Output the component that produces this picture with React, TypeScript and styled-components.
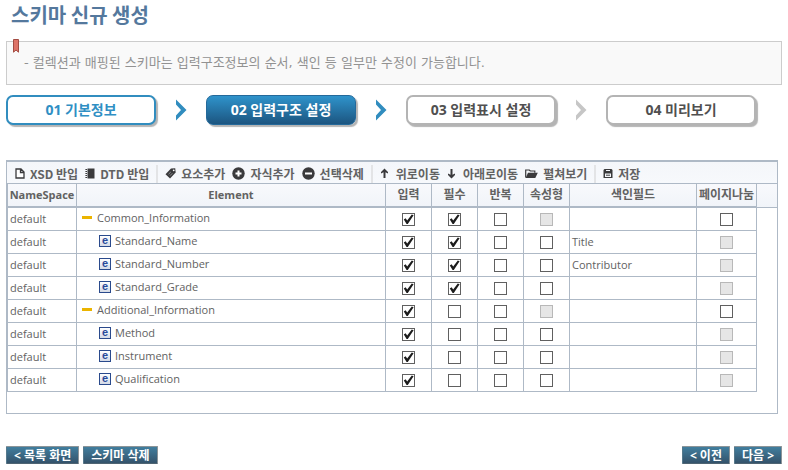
import React, { useState } from "react";
import styled, { createGlobalStyle, css } from "styled-components";

const line = "#aeb9c6";
const ink = "#3a3a3c";

const GlobalStyle = createGlobalStyle`
  * { box-sizing: border-box; }
  body {
    margin: 0;
    background: #fff;
    color: #626262;
    font-family: "Open Sans", "Noto Sans CJK KR", sans-serif;
    font-size: 12px;
  }
  button, input { font: inherit; color: inherit; margin: 0; }
  button { cursor: pointer; }
`;

const Page = styled.main`
  padding: 0 6px 6px;
`;

const Title = styled.h1`
  margin: 0;
  padding-left: 5px;
  font-family: "Noto Sans CJK KR", sans-serif;
  font-size: 20px;
  font-weight: 700;
  line-height: 29px;
  color: #54789d;
`;

const Notice = styled.p`
  position: relative;
  margin: 12px 0 10px;
  padding: 9px 17px 10px;
  border: 1px solid #ccc;
  background: #f9f9f9;
  font-family: "DejaVu Sans", "Noto Sans CJK KR", sans-serif;
  font-size: 13px;
  line-height: 23px;
  color: #929292;
`;

const Ribbon = styled.svg`
  position: absolute;
  left: 6px;
  top: -3px;
`;

const Steps = styled.nav`
  display: flex;
  align-items: center;
  margin-right: 26px;
`;

type StepKind = "done" | "current" | "next";

const Step = styled.button<{ $kind: StepKind }>`
  flex: 1 1 150px;
  height: 30px;
  padding: 0;
  border-radius: 7px;
  font-size: 14px;
  font-weight: 700;
  line-height: 24px;
  ${(p) =>
    p.$kind === "done" &&
    css`
      color: #2f8fc4;
      background: #fff;
      border: 2px solid #318dbf;
      box-shadow: 2px 2px 1px #b4b4b4;
    `}
  ${(p) =>
    p.$kind === "current" &&
    css`
      color: #fff;
      background: linear-gradient(#2f93cb, #1c5580);
      border: 1px solid #24699a;
      box-shadow: 2px 2px 1px #b4b4b4;
    `}
  ${(p) =>
    p.$kind === "next" &&
    css`
      color: #505050;
      background: #fff;
      border: 2px solid #b4b4b4;
      box-shadow: 2px 2px 1px #b4b4b4;
    `}
`;

const StepGap = styled.span`
  display: flex;
  justify-content: center;
  width: 50px;
`;

const Panel = styled.section`
  margin: 35px 4px 32px 0;
  min-height: 254px;
  border: 1px solid ${line};
  border-top-width: 2px;
`;

const Toolbar = styled.div`
  display: flex;
  align-items: center;
  gap: 7px;
  height: 22px;
  padding: 2px 8px 0;
  border-bottom: 1px solid ${line};
  background: linear-gradient(#f4f6fa, #f7f9fc);
`;

const ToolButton = styled.button`
  display: flex;
  align-items: center;
  gap: 5px;
  padding: 0;
  border: 0;
  background: none;
  font-family: "Noto Sans CJK KR", sans-serif;
  font-weight: 700;
  line-height: 18px;
  white-space: nowrap;
`;

const Separator = styled.span`
  width: 2px;
  height: 18px;
  background: #e3e4e6;
`;

const Grid = styled.table`
  width: 100%;
  table-layout: fixed;
  border-collapse: separate;
  border-spacing: 0;
  border-left: 1px solid ${line};
`;

const Head = styled.th<{ $latin: boolean }>`
  height: 24px;
  padding: 0;
  border-right: 1px solid ${line};
  border-bottom: 2px solid ${line};
  background: linear-gradient(#f8f9fc, #f1f4f9);
  font-size: ${(p) => (p.$latin ? 11 : 12)}px;
  font-weight: 700;
  line-height: 18px;
  white-space: nowrap;
  &:last-child { border-right: 0; border-bottom-width: 1px; }
`;

const Cell = styled.td<{ $center?: boolean }>`
  height: 23px;
  padding: 0 2px;
  border-right: 1px solid ${line};
  border-bottom: 1px solid ${line};
  font-size: 11px;
  line-height: 18px;
  text-align: ${(p) => (p.$center ? "center" : "left")};
  white-space: nowrap;
`;

const Filler = styled.td`
  padding: 0;
`;

const Node = styled.div<{ $child: boolean }>`
  display: flex;
  align-items: center;
  gap: 4px;
  padding-left: ${(p) => (p.$child ? 20 : 3)}px;
  padding-bottom: 3px;
`;

const Toggle = styled.button`
  display: flex;
  align-items: center;
  width: 11px;
  height: 12px;
  padding: 0;
  border: 0;
  background: none;
  &::before {
    content: "";
    width: 10px;
    height: 3px;
    background: #ebb400;
  }
`;

const ElementIcon = styled.span`
  width: 12px;
  height: 12px;
  border: 1px solid #2a4a8c;
  background: linear-gradient(#fff, #d4dae6);
  color: #2a4a9a;
  font-family: "Liberation Sans", sans-serif;
  font-size: 11px;
  font-weight: 700;
  line-height: 9px;
  text-align: center;
`;

const CheckWrap = styled.span`
  position: relative;
  display: block;
  width: 13px;
  height: 13px;
  margin: 0 auto;
  svg { position: absolute; left: 0; top: 0; pointer-events: none; }
`;

const CheckInput = styled.input`
  display: block;
  appearance: none;
  width: 13px;
  height: 13px;
  border: 1px solid #606060;
  background: #fff;
  &:disabled { border-color: #b8b8b8; background: #e6e6e6; }
`;

const Footer = styled.footer`
  display: flex;
  justify-content: space-between;
`;

const Group = styled.div`
  display: flex;
  gap: 4px;
`;

const Action = styled.button`
  height: 18px;
  padding: 0 7px;
  border: 1px solid #8c9498;
  border-left-color: #55798c;
  border-bottom-color: #4e6472;
  border-radius: 1px;
  background: linear-gradient(#417e9e, #34536b);
  color: #fff;
  font-weight: 700;
  line-height: 15px;
  white-space: nowrap;
`;

const Arrow = ({ color }: { color: string }) => (
  <svg width="12" height="22" viewBox="0 0 12 22" aria-hidden="true">
    <path d="M1 0.5 11.5 11 1 21.5V16.5L6 11 1 5.5Z" fill={color} />
  </svg>
);

const icons: Record<string, React.ReactElement> = {
  file: (
    <svg width="10" height="11" viewBox="0 0 10 11">
      <path d="M1 1h5l3 3v6H1ZM5.5 1v3.5H9" fill="#fff" stroke={ink} strokeWidth="1.3" />
    </svg>
  ),
  book: (
    <svg width="10" height="11" viewBox="0 0 10 11">
      <path d="M2.5 .5H9.5v10H2.5Z" fill={ink} />
      <path d="M1.2 1v9.5" stroke={ink} strokeWidth="1.6" strokeDasharray="1 1" />
    </svg>
  ),
  tag: (
    <svg width="11" height="11" viewBox="0 0 11 11">
      <path d="M6 .5 10.2 .3 10.7 4.5 5 10.5 .5 6.2Z" fill={ink} />
      <circle cx="8.7" cy="2.3" r=".9" fill="#fff" />
      <path d="M3.5 6.2 5.8 4M5 7.7 7.3 5.3" stroke="#b4b6ba" strokeWidth=".7" />
    </svg>
  ),
  plus: (
    <svg width="13" height="13" viewBox="0 0 13 13">
      <circle cx="6.5" cy="6.5" r="6.2" fill={ink} />
      <path d="M6.5 3.5v6M3.5 6.5h6" stroke="#fff" strokeWidth="2" />
    </svg>
  ),
  minus: (
    <svg width="13" height="13" viewBox="0 0 13 13">
      <circle cx="6.5" cy="6.5" r="6.2" fill={ink} />
      <path d="M3 6.5h7" stroke="#fff" strokeWidth="2" />
    </svg>
  ),
  up: (
    <svg width="11" height="11" viewBox="0 0 11 11">
      <path d="M4.5 .5 8 4v1.5L5.5 4.2V10h-2V4.2L1 5.5V4Z" fill={ink} />
    </svg>
  ),
  down: (
    <svg width="11" height="11" viewBox="0 0 11 11">
      <path d="M4.5 10.5 8 7V5.5L5.5 6.8V1h-2v5.8L1 5.5V7Z" fill={ink} />
    </svg>
  ),
  folder: (
    <svg width="13" height="11" viewBox="0 0 13 11">
      <path d="M.7 9.5V2h3.6l1 1h4.5v1.8" fill="none" stroke={ink} strokeWidth="1.2" />
      <path d="M3 4.7h9.8L10.3 10H.6Z" fill={ink} />
    </svg>
  ),
  save: (
    <svg width="10" height="11" viewBox="0 0 10 11">
      <path d="M1.5 1h7l1 1v8h-9V2Z" fill={ink} />
      <path d="M3 2h4v1H3ZM2 5.5h6V9H2Z" fill="#f4f6fa" />
      <path d="M3 7.2h4" stroke={ink} />
    </svg>
  ),
};

const tools = [
  ["file", "XSD 반입"],
  ["book", "DTD 반입"],
  null,
  ["tag", "요소추가"],
  ["plus", "자식추가"],
  ["minus", "선택삭제"],
  null,
  ["up", "위로이동"],
  ["down", "아래로이동"],
  ["folder", "펼쳐보기"],
  null,
  ["save", "저장"],
];

const steps: [string, StepKind][] = [
  ["01 기본정보", "done"],
  ["02 입력구조 설정", "current"],
  ["03 입력표시 설정", "next"],
  ["04 미리보기", "next"],
];

// Flags per column: "x" ticked, "o" empty, "-" disabled.
const rows: { name: string; child: boolean; flags: string; field: string; page: string }[] = [
  { name: "Common_Information", child: false, flags: "xxo-", field: "", page: "o" },
  { name: "Standard_Name", child: true, flags: "xxoo", field: "Title", page: "-" },
  { name: "Standard_Number", child: true, flags: "xxoo", field: "Contributor", page: "-" },
  { name: "Standard_Grade", child: true, flags: "xxoo", field: "", page: "-" },
  { name: "Additional_Information", child: false, flags: "xoo-", field: "", page: "o" },
  { name: "Method", child: true, flags: "xooo", field: "", page: "-" },
  { name: "Instrument", child: true, flags: "xooo", field: "", page: "-" },
  { name: "Qualification", child: true, flags: "xooo", field: "", page: "-" },
];

const flagNames = ["입력", "필수", "반복", "속성형"];

function Check({ state, label }: { state: string; label: string }) {
  const [on, setOn] = useState(state === "x");
  return (
    <CheckWrap>
      <CheckInput
        type="checkbox"
        aria-label={label}
        checked={on}
        disabled={state === "-"}
        onChange={(e) => setOn(e.target.checked)}
      />
      {on && (
        <svg width="13" height="13" viewBox="0 0 13 13" aria-hidden="true">
          <path d="M1.8 6.4 3.6 5.2 5.2 7.5 9.8 1.6 11.6 2.2 5.8 10.9H4.6Z" fill="#1c1c1c" />
        </svg>
      )}
    </CheckWrap>
  );
}

export default function App() {
  return (
    <Page>
      <GlobalStyle />
      <Title>스키마 신규 생성</Title>
      <Notice>
        <Ribbon width="6" height="14" viewBox="0 0 6 14" aria-hidden="true">
          <path d="M.5 .5h5v12.7L3 11 .5 13.2Z" fill="#de7468" stroke="#a34c43" />
        </Ribbon>
        - 컬렉션과 매핑된 스키마는 입력구조정보의 순서, 색인 등 일부만 수정이 가능합니다.
      </Notice>
      <Steps>
        {steps.map(([label, kind], i) => (
          <React.Fragment key={label}>
            {i > 0 && (
              <StepGap>
                <Arrow color={i < 3 ? "#318dbf" : "#c6c6c6"} />
              </StepGap>
            )}
            <Step type="button" $kind={kind}>
              {label}
            </Step>
          </React.Fragment>
        ))}
      </Steps>
      <Panel>
        <Toolbar>
          {tools.map((tool, i) =>
            tool ? (
              <ToolButton key={i} type="button">
                {icons[tool[0]]}
                {tool[1]}
              </ToolButton>
            ) : (
              <Separator key={i} />
            )
          )}
        </Toolbar>
        <Grid>
          <colgroup>
            <col style={{ width: 69 }} />
            <col style={{ width: 309 }} />
            <col style={{ width: 46 }} />
            <col style={{ width: 46 }} />
            <col style={{ width: 46 }} />
            <col style={{ width: 46 }} />
            <col />
            <col style={{ width: 60 }} />
            <col style={{ width: 20 }} />
          </colgroup>
          <thead>
            <tr>
              {["NameSpace", "Element", ...flagNames, "색인필드", "페이지나눔", ""].map((h, i) => (
                <Head key={i} $latin={i < 2}>
                  {h}
                </Head>
              ))}
            </tr>
          </thead>
          <tbody>
            {rows.map((row) => (
              <tr key={row.name}>
                <Cell>default</Cell>
                <Cell>
                  <Node $child={row.child}>
                    {row.child ? (
                      <ElementIcon aria-hidden="true">e</ElementIcon>
                    ) : (
                      <Toggle type="button" aria-label={`${row.name} 접기`} />
                    )}
                    {row.name}
                  </Node>
                </Cell>
                {flagNames.map((name, i) => (
                  <Cell key={name} $center>
                    <Check state={row.flags[i]} label={`${row.name} ${name}`} />
                  </Cell>
                ))}
                <Cell>{row.field}</Cell>
                <Cell $center>
                  <Check state={row.page} label={`${row.name} 페이지나눔`} />
                </Cell>
                <Filler />
              </tr>
            ))}
          </tbody>
        </Grid>
      </Panel>
      <Footer>
        <Group>
          <Action type="button">&lt; 목록 화면</Action>
          <Action type="button">스키마 삭제</Action>
        </Group>
        <Group>
          <Action type="button">&lt; 이전</Action>
          <Action type="button">다음 &gt;</Action>
        </Group>
      </Footer>
    </Page>
  );
}
